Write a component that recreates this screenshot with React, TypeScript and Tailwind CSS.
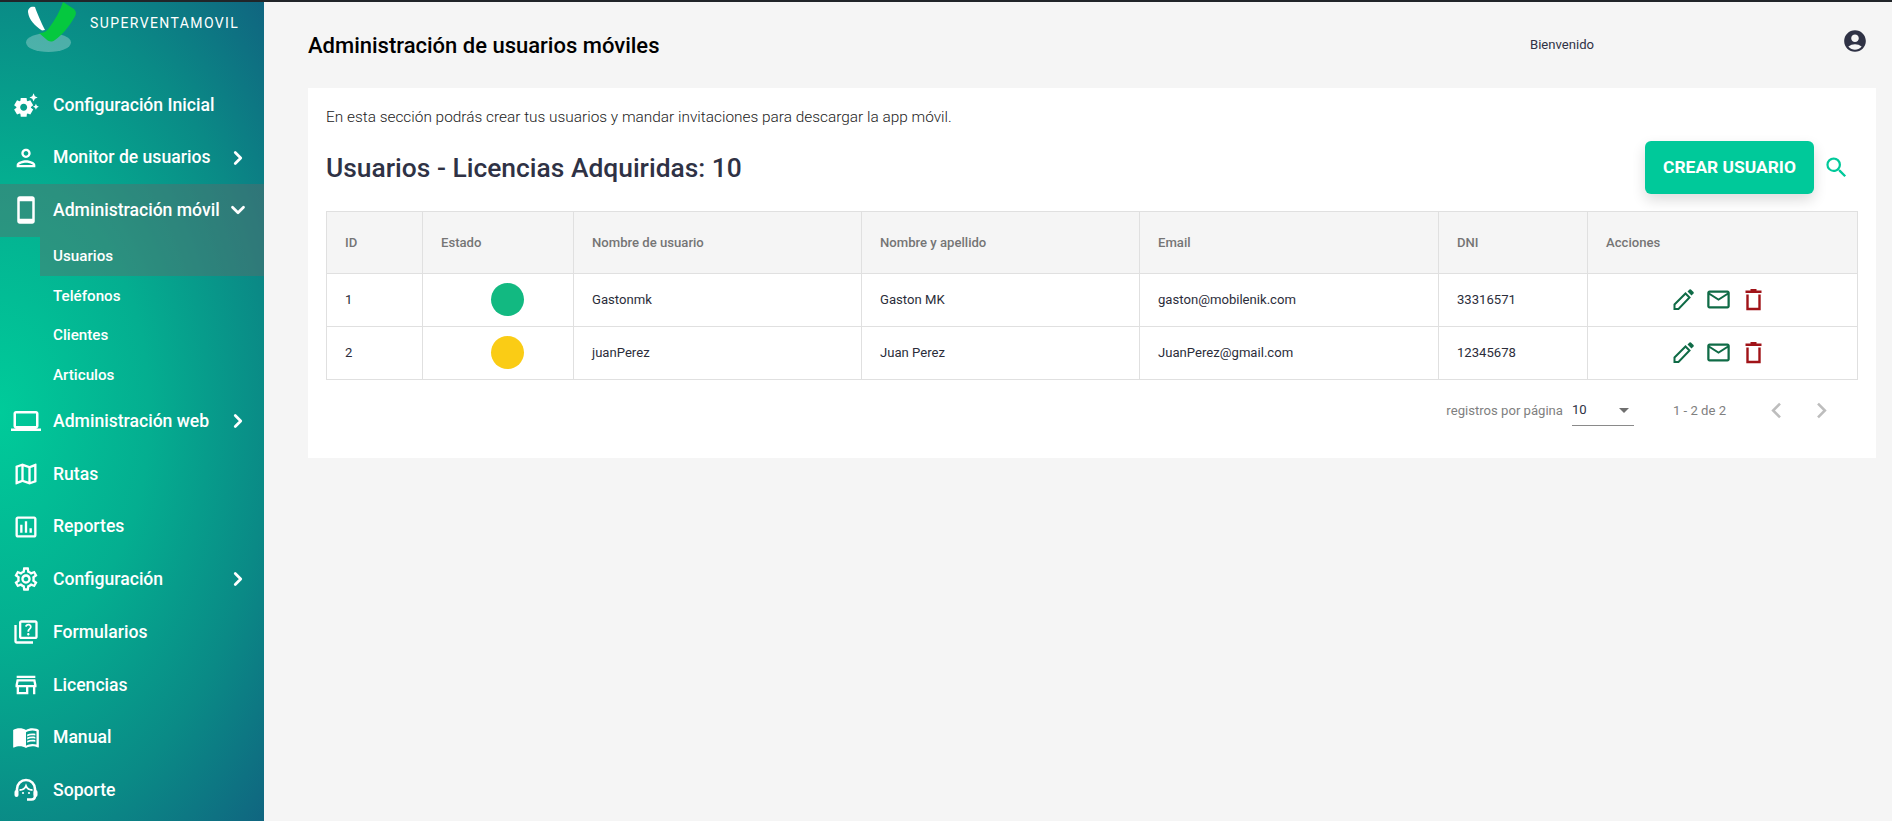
import { ReactNode } from "react";
import { ChevronDown, ChevronRight } from "lucide-react";
import {
  MdAccountCircle,
  MdChevronLeft,
  MdChevronRight,
  MdMailOutline,
  MdMenuBook,
  MdOutlineAssessment,
  MdOutlineLaptop,
  MdOutlineMap,
  MdOutlinePerson,
  MdOutlineQuiz,
  MdOutlineSettings,
  MdOutlineSmartphone,
  MdOutlineStore,
  MdSearch,
  MdSettingsSuggest,
} from "react-icons/md";

const SupportIcon = () => (
  <svg width="26" height="26" viewBox="0 0 26 26" fill="none" stroke="currentColor">
    <path strokeWidth="2.6" d="M4 15v-3a9 9 0 0 1 18 0v7c0 2.500-1.500 3.500-3.500 3.500H14" />
    <path strokeWidth="2" d="M6.500 13c3 0 5.500-1.500 6.500-4 1 2.500 3.500 4 6.500 4" />
    <rect x="1.500" y="13" width="4" height="7" rx="2" fill="currentColor" stroke="none" />
    <rect x="20.500" y="13" width="4" height="7" rx="2" fill="currentColor" stroke="none" />
    <circle cx="10" cy="16" r="1.100" fill="currentColor" stroke="none" />
    <circle cx="16" cy="16" r="1.100" fill="currentColor" stroke="none" />
  </svg>
);

const PencilIcon = () => (
  <svg width="27" height="27" viewBox="0 0 27 27" className="text-[#0f6b46]">
    <path d="M4.500 23v-4.500L15.500 7.500l4 4L8.500 23Z" fill="none" stroke="currentColor" strokeWidth="2" />
    <path d="M17.500 5.500l2-2a1 1 0 0 1 1.400 0l2.600 2.600a1 1 0 0 1 0 1.400l-2 2Z" fill="currentColor" />
  </svg>
);

const TrashIcon = () => (
  <svg width="27" height="27" viewBox="0 0 27 27" className="text-[#a01318]">
    <path d="M5.500 4.500h16v2.500h-16ZM10.500 3h6v2h-6Z" fill="currentColor" />
    <path d="M7.500 8.500v14.500h12V8.500" fill="none" stroke="currentColor" strokeWidth="2.400" />
  </svg>
);

const Logo = () => (
  <svg width="80" height="54" viewBox="0 0 80 54" className="shrink-0">
    <ellipse cx="48.500" cy="40.500" rx="22.500" ry="9.500" fill="#ffffff" fillOpacity="0.28" />
    <path d="M28 10 C28 6 31 4 35 5 C37 11 41 20 45 28 L42 28.500 C35 24 29 18 28 10 Z" fill="#ffffff" />
    <path d="M63 0 L74 7 C77 10 76 13 74 16 C69 25 62 33 55 38 C51 41 48 39 46 37 L39 31 C44 31 47 29 49 26 C55 18 60 9 63 0 Z" fill="#05c83f" />
  </svg>
);

type Item = { label: string; icon: ReactNode; arrow?: "right" | "down"; active?: boolean };

const before: Item[] = [
  { label: "Configuración Inicial", icon: <MdSettingsSuggest size={28} /> },
  { label: "Monitor de usuarios", icon: <MdOutlinePerson size={28} />, arrow: "right" },
  { label: "Administración móvil", icon: <MdOutlineSmartphone size={30} />, arrow: "down", active: true },
];

const after: Item[] = [
  { label: "Administración web", icon: <MdOutlineLaptop size={30} />, arrow: "right" },
  { label: "Rutas", icon: <MdOutlineMap size={28} /> },
  { label: "Reportes", icon: <MdOutlineAssessment size={28} /> },
  { label: "Configuración", icon: <MdOutlineSettings size={28} />, arrow: "right" },
  { label: "Formularios", icon: <MdOutlineQuiz size={28} /> },
  { label: "Licencias", icon: <MdOutlineStore size={28} /> },
  { label: "Manual", icon: <MdMenuBook size={28} /> },
  { label: "Soporte", icon: <SupportIcon /> },
];

const subItems = ["Usuarios", "Teléfonos", "Clientes", "Articulos"];

const users = [
  { id: 1, color: "bg-[#12b981]", user: "Gastonmk", name: "Gaston MK", email: "gaston@mobilenik.com", dni: "33316571" },
  { id: 2, color: "bg-[#facc15]", user: "juanPerez", name: "Juan Perez", email: "JuanPerez@gmail.com", dni: "12345678" },
];

const NavRow = ({ item }: { item: Item }) => (
  <div className={`flex h-[52.7px] items-center text-[17.6px] font-medium ${item.active ? "bg-[#666666]/40" : ""}`}>
    <span className="flex w-[53px] shrink-0 justify-center pr-[1px]">{item.icon}</span>
    <span className="flex-1 whitespace-nowrap">{item.label}</span>
    {item.arrow === "right" && <ChevronRight size={22} strokeWidth={3} className="mr-[15px]" />}
    {item.arrow === "down" && <ChevronDown size={22} strokeWidth={3} className="mr-[15px]" />}
  </div>
);

const headers = ["ID", "Estado", "Nombre de usuario", "Nombre y apellido", "Email", "DNI", "Acciones"];
const widths = ["w-[96px]", "w-[151px]", "w-[288px]", "w-[278px]", "w-[299px]", "w-[149px]", "w-[270px]"];

export default function App() {
  return (
    <div className="flex h-screen overflow-hidden border-t-2 border-[#212529] bg-[#f5f5f5] font-['Roboto',sans-serif]">
      <aside className="w-[264px] shrink-0 bg-[radial-gradient(ellipse_at_0%_50%,#00cb9a_0%,#04ae90_40%,#0a8a86_72%,#106580_100%)] text-white">
        <div className="flex h-[76.5px] items-start">
          <Logo />
          <span className="mt-[11px] ml-[10px] whitespace-nowrap text-[14px] tracking-[1.4px]">SUPERVENTAMOVIL</span>
        </div>
        {before.map((item) => (
          <NavRow key={item.label} item={item} />
        ))}
        <div className="text-[15.2px] font-medium">
          {subItems.map((label, i) => (
            <div key={label} className={`ml-[40px] flex h-[39.6px] items-center pl-[13px] ${i === 0 ? "bg-[#666666]/40" : ""}`}>
              {label}
            </div>
          ))}
        </div>
        {after.map((item) => (
          <NavRow key={item.label} item={item} />
        ))}
      </aside>

      <main className="min-w-0 flex-1 pl-[44px] pr-[16px]">
        <header className="flex h-[86px] items-center">
          <h1 className="w-[1222px] text-[22px] font-medium text-black">Administración de usuarios móviles</h1>
          <span className="w-[313px] text-[13.12px] text-[#2f3245]">Bienvenido</span>
          <MdAccountCircle size={26} className="mb-[8px] -ml-[1px] text-[#2f3245]" />
        </header>

        <section className="h-[370px] bg-white px-[18px] pt-[20px]">
          <p className="text-[15.4px] font-light leading-[18px] text-[#222]">
            En esta sección podrás crear tus usuarios y mandar invitaciones para descargar la app móvil.
          </p>
          <div className="mt-[15px] flex items-center justify-between pr-[8px]">
            <h2 className="text-[26.4px] font-medium leading-[32px] text-[#2f3245]">Usuarios - Licencias Adquiridas: 10</h2>
            <div className="flex items-center gap-[9px]">
              <button className="h-[53px] w-[169px] rounded-[6px] bg-[#00c99a] text-[17.4px] font-bold text-white shadow-[0_6px_14px_rgba(0,0,0,0.14)]">
                CREAR USUARIO
              </button>
              <MdSearch size={27} className="text-[#00c99a]" />
            </div>
          </div>

          <table className="mt-[17px] w-[1531px] table-fixed border-collapse text-[13.12px] text-[#2b2d3a]">
            <thead>
              <tr className="h-[62px] bg-[#f5f5f5] font-medium text-[#757575]">
                {headers.map((h, i) => (
                  <th key={h} className={`${widths[i]} border border-[#e0e0e0] pl-[18px] text-left font-medium`}>
                    {h}
                  </th>
                ))}
              </tr>
            </thead>
            <tbody>
              {users.map((u) => (
                <tr key={u.id} className="h-[53px]">
                  <td className="border border-[#e0e0e0] pl-[18px]">{u.id}</td>
                  <td className="border border-[#e0e0e0] pl-[18px]">
                    <div className={`mx-auto mb-[2px] h-[33px] w-[33px] rounded-full ${u.color}`} />
                  </td>
                  <td className="border border-[#e0e0e0] pl-[18px]">{u.user}</td>
                  <td className="border border-[#e0e0e0] pl-[18px]">{u.name}</td>
                  <td className="border border-[#e0e0e0] pl-[18px]">{u.email}</td>
                  <td className="border border-[#e0e0e0] pl-[18px]">{u.dni}</td>
                  <td className="border border-[#e0e0e0]">
                    <div className="mb-[2px] flex items-center justify-center gap-[8px] pr-[9px]">
                      <PencilIcon />
                      <MdMailOutline size={27} className="text-[#0f6b46]" />
                      <TrashIcon />
                    </div>
                  </td>
                </tr>
              ))}
            </tbody>
          </table>

          <div className="mt-[7px] flex h-[47px] items-center justify-end pr-[21px] text-[13.12px] text-[#808080]">
            <span>registros por página</span>
            <div className="ml-[9px] flex h-[30px] w-[62px] items-center justify-between border-b border-[#8a8a8a] text-[#2f3245]">
              <span>10</span>
              <span className="mr-[5px] h-0 w-0 border-x-[5px] border-t-[5px] border-x-transparent border-t-[#6f6f6f]" />
            </div>
            <span className="ml-[39px] w-[53px] whitespace-nowrap">1 - 2 de 2</span>
            <MdChevronLeft size={31} className="ml-[35px] text-[#bdbdbd]" />
            <MdChevronRight size={31} className="ml-[14px] text-[#bdbdbd]" />
          </div>
        </section>
      </main>
    </div>
  );
}
